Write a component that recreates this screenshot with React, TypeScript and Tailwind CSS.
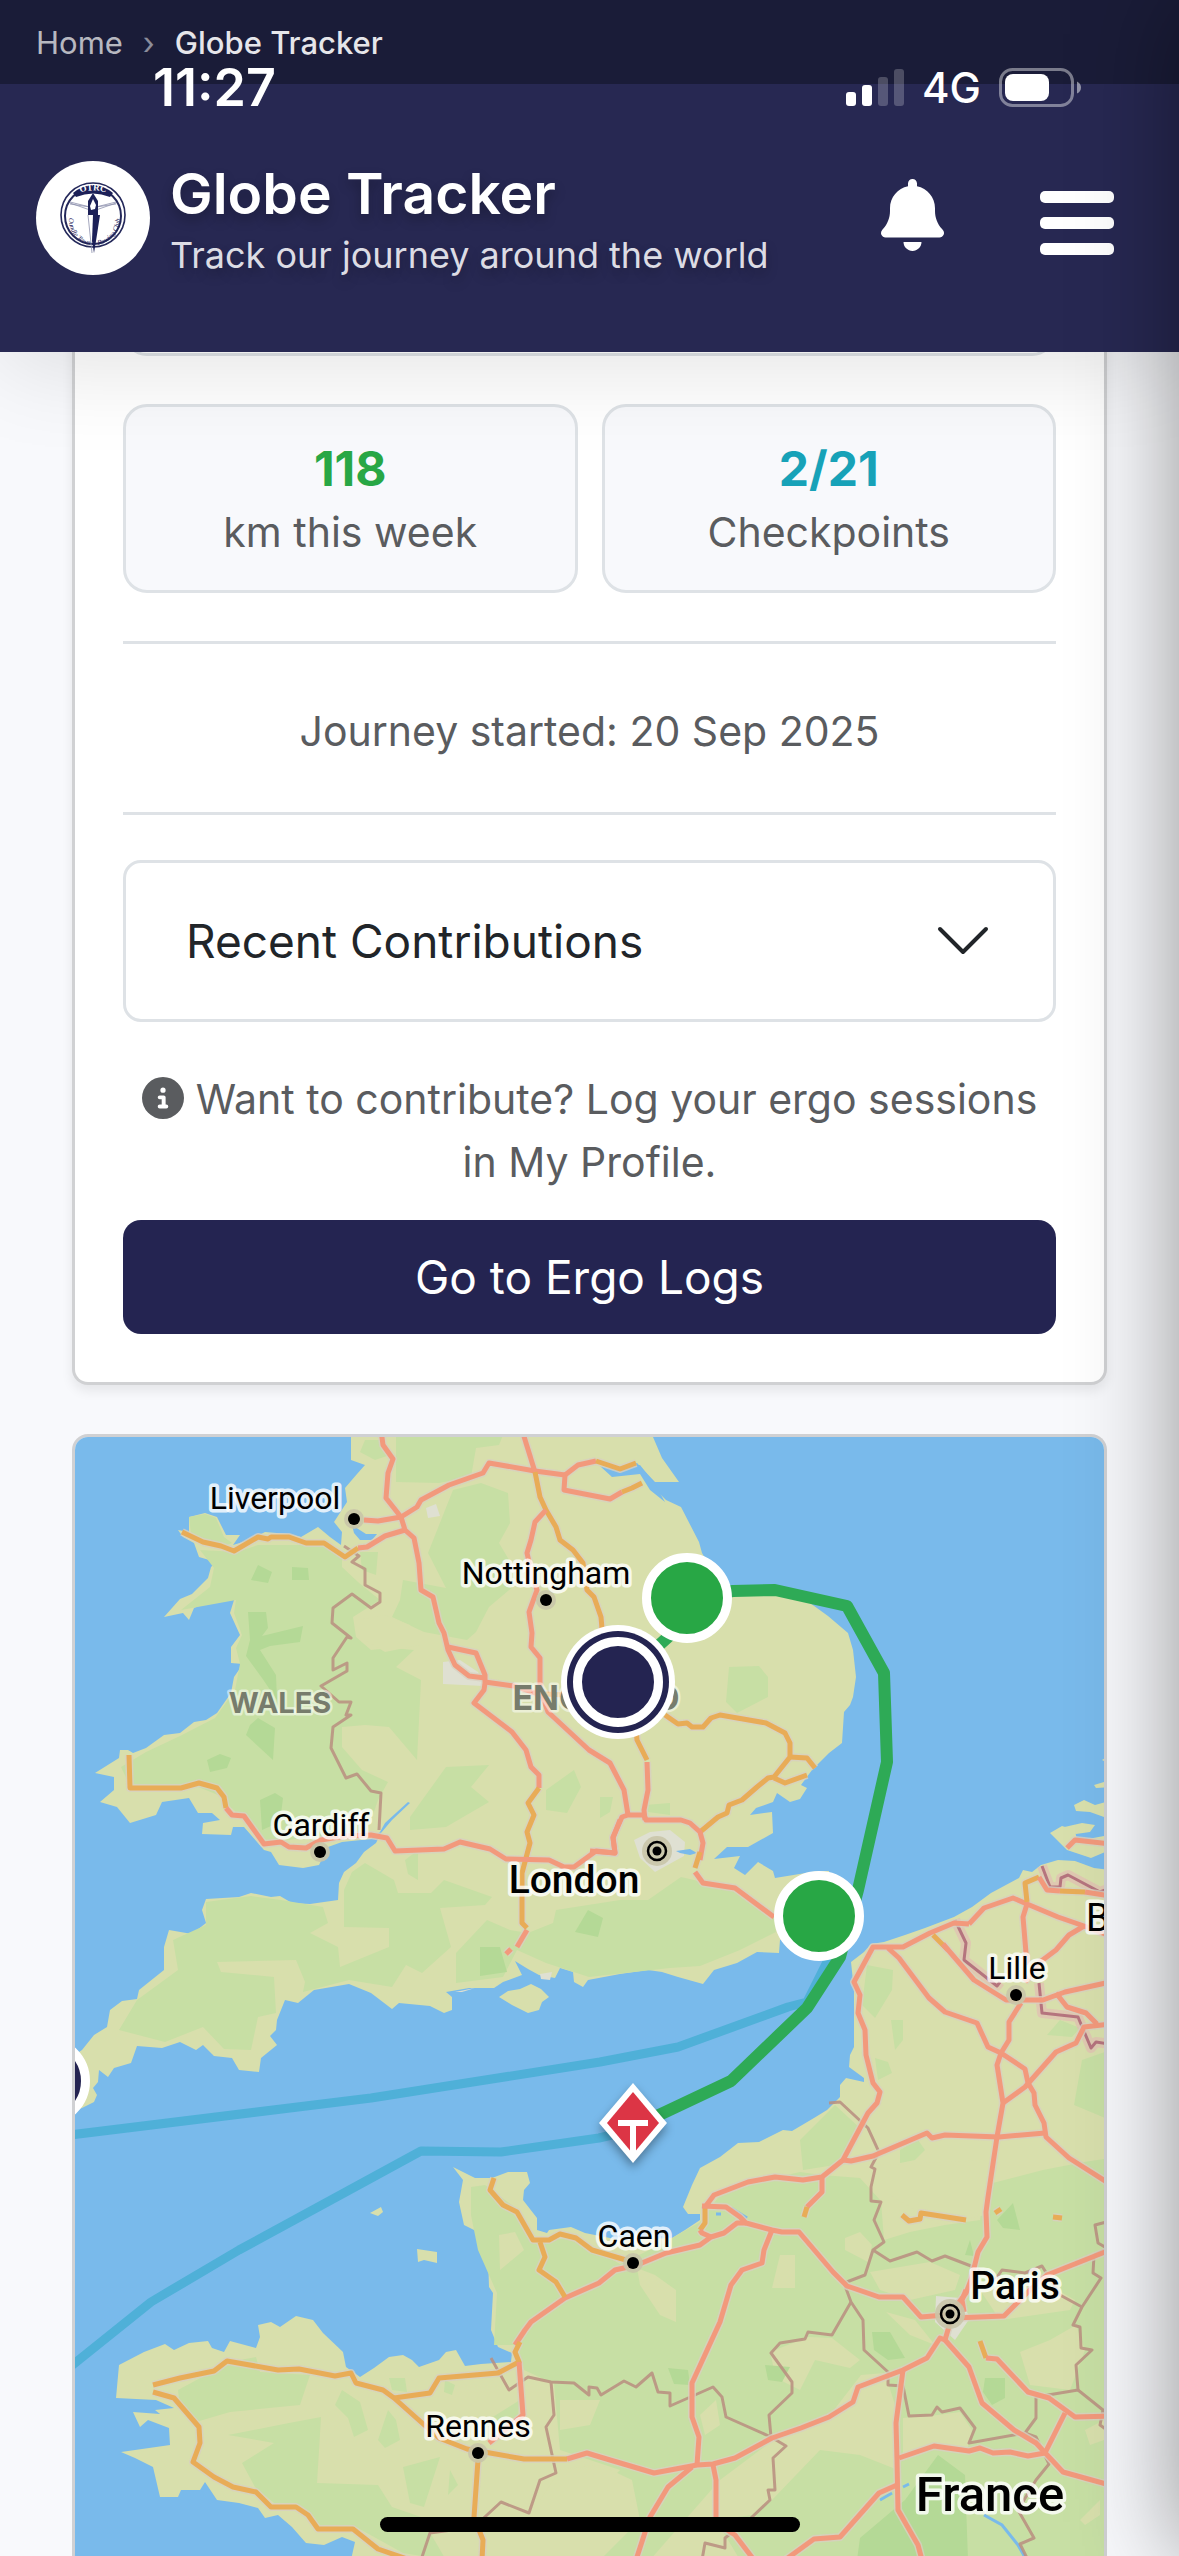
import React, { useState } from 'react';
import { FaBell, FaCircleInfo } from 'react-icons/fa6';

interface Road {
  kind: 'motorway' | 'trunk';
  points: string;
}

interface Place {
  name: string;
  x: number;
  y: number;
  size: number;
  weight: number;
}

interface Stat {
  value: string;
  label: string;
  colour: string;
}

const STATS: Stat[] = [
  { value: '118', label: 'km this week', colour: 'text-[#28a745]' },
  { value: '2/21', label: 'Checkpoints', colour: 'text-[#17a2b8]' },
];

// Land masses
const LAND: string[] = [
  // Great Britain
  '351,1430 351,1460 365,1465 357,1474 345,1488 347,1502 334,1522 342,1532 341,1545 330,1537 318,1527 301,1537 288,1534 265,1532 250,1540 233,1545 240,1535 226,1535 217,1517 205,1513 189,1517 189,1532 178,1530 183,1537 194,1543 199,1557 216,1562 211,1567 208,1578 192,1594 180,1599 164,1617 183,1613 189,1620 194,1608 208,1602 234,1600 230,1613 240,1635 231,1647 231,1663 243,1664 234,1677 231,1693 217,1713 206,1720 194,1722 180,1733 164,1735 146,1748 133,1753 128,1750 120,1750 119,1758 95,1773 114,1777 114,1790 100,1802 117,1807 130,1823 156,1815 162,1802 189,1798 198,1813 212,1813 220,1820 203,1823 202,1834 231,1835 233,1827 244,1827 264,1850 271,1852 279,1865 303,1868 319,1865 328,1847 342,1842 371,1839 380,1832 385,1823 408,1802 410,1803 392,1820 381,1833 376,1843 364,1852 356,1863 344,1872 339,1883 338,1900 310,1904 292,1903 280,1896 271,1897 251,1893 239,1897 206,1899 202,1910 206,1923 192,1934 169,1930 164,1947 164,1970 139,1990 137,1999 122,2001 110,2010 107,2027 94,2035 82,2050 70,2058 70,2112 82,2108 94,2102 97,2095 93,2088 98,2082 99,2070 108,2077 114,2068 131,2063 137,2046 162,2048 180,2042 196,2050 203,2045 214,2056 232,2058 239,2070 259,2072 261,2058 277,2045 270,2036 276,2030 277,2020 285,2000 298,2003 314,1990 349,1984 371,1993 392,2009 399,2003 430,2006 444,2013 452,2010 452,1997 446,1992 469,1988 494,1988 503,1982 522,1975 515,1961 528,1969 539,1975 555,1978 560,1968 573,1972 574,1982 583,1987 588,1980 620,1974 648,1970 662,1972 678,1977 703,1984 714,1970 737,1963 757,1952 779,1953 780,1940 812,1925 829,1900 829,1871 818,1871 775,1878 773,1871 758,1862 745,1875 734,1868 740,1856 714,1859 727,1847 748,1847 773,1833 772,1812 750,1815 756,1808 773,1802 777,1793 790,1802 800,1799 807,1788 801,1785 812,1770 829,1753 842,1743 844,1712 850,1705 853,1697 856,1677 853,1650 848,1633 828,1616 810,1603 777,1593 733,1596 715,1575 702,1553 699,1542 681,1507 666,1500 650,1484 641,1471 615,1475 610,1468 637,1463 655,1482 679,1482 662,1458 650,1430',
  // Continental coast, Zeeland round to Finistere
  '1110,1870 1094,1868 1075,1861 1058,1860 1041,1865 1032,1872 1023,1870 1019,1878 991,1893 972,1907 954,1917 925,1928 905,1935 884,1942 871,1944 864,1952 851,1962 854,1990 854,2047 850,2055 849,2067 864,2078 864,2082 846,2078 840,2085 840,2097 827,2110 814,2118 792,2131 783,2130 759,2142 738,2143 720,2157 700,2168 692,2185 683,2207 688,2214 700,2214 700,2220 685,2230 672,2238 620,2240 585,2233 571,2227 549,2230 547,2233 537,2230 537,2218 523,2200 524,2190 530,2183 527,2172 508,2172 492,2178 475,2178 453,2167 463,2180 459,2202 464,2225 478,2232 488,2257 489,2287 493,2293 491,2330 498,2347 512,2353 511,2362 481,2364 465,2366 456,2350 446,2352 439,2360 419,2367 412,2360 403,2355 389,2357 374,2368 360,2377 346,2367 343,2352 323,2333 313,2320 296,2316 280,2327 271,2322 258,2325 260,2337 256,2348 230,2341 224,2352 212,2348 208,2341 189,2343 174,2350 165,2344 144,2352 119,2365 116,2398 156,2400 174,2408 155,2410 160,2414 133,2412 140,2427 148,2420 169,2428 170,2445 121,2452 135,2458 153,2467 160,2497 178,2497 181,2490 200,2490 205,2482 217,2500 239,2503 258,2508 265,2518 278,2515 292,2527 306,2543 324,2545 342,2537 355,2542 351,2560 1110,2560',
  // Isle of Wight
  '499,1997 508,1991 520,1989 531,1984 541,1989 549,1997 542,2002 539,2010 528,2013 512,2005',
  '1050,1833 1062,1826 1075,1830 1077,1841 1104,1836 1110,1850 1091,1858 1067,1850',
  '1060,1828 1082,1823 1095,1825 1090,1832 1076,1834',
  '1074,1805 1084,1800 1095,1805 1110,1801 1110,1819 1090,1812 1076,1811',
  '1094,1785 1110,1780 1110,1787 1096,1788',
  '1102,1760 1110,1755 1110,1764',
  // Channel Islands
  '370,2213 381,2207 383,2212 378,2216',
  '417,2249 437,2252 437,2263 424,2260 418,2262',
];

const PASTURE: string[] = [
  '189,1517 205,1514 216,1518 224,1537 232,1543 222,1547 191,1534',
  '237,1552 258,1545 289,1545 324,1545 342,1557 342,1567 358,1582 364,1587 380,1600 353,1617 356,1637 371,1650 392,1648 414,1650 396,1667 421,1680 417,1760 389,1727 365,1725 342,1727 342,1747 362,1770 388,1782 378,1800 367,1832 320,1836 264,1843 239,1815 218,1795 196,1786 131,1788 121,1767 146,1752 180,1736 215,1718 235,1690 240,1664 236,1648 242,1635 234,1613 236,1600 181,1610 210,1587 214,1568 200,1550',
  '206,1902 251,1896 281,1900 323,1907 328,1923 310,1933 338,1947 340,1967 389,1947 389,1928 344,1927 344,1890 352,1872 365,1863 394,1880 398,1893 431,1893 444,1880 492,1897 485,1905 440,1908 451,1947 422,1973 406,1965 392,1987 349,1980 303,1992 305,1982 296,1960 217,1962 221,1972 274,1977 276,2013 258,2017 251,2050 224,2049 203,2027 165,2042 119,2030 137,2000 178,1970 173,1940 206,1925',
  '456,1953 487,1920 510,1930 528,1933 553,1923 556,1910 620,1900 648,1900 681,1877 729,1888 774,1917 776,1932 740,1950 700,1966 670,1968 589,1977 546,1963 517,1950 503,1977 456,1983',
  '396,1430 505,1430 499,1445 476,1448 471,1477 439,1483 396,1482',
  '453,1490 481,1483 508,1493 510,1523 499,1543 521,1580 489,1607 476,1632 467,1640 424,1632 392,1617 400,1600 403,1580 446,1588 428,1553',
  '410,1817 446,1767 489,1765 471,1787 489,1802 446,1827 410,1830',
  '546,1790 574,1770 581,1787 567,1813 546,1810',
  '729,1667 759,1666 768,1677 768,1697 737,1713 726,1702',
  '365,1440 380,1440 390,1455 375,1460 360,1452',
  '360,1552 378,1552 376,1575 362,1570',
  '405,1860 418,1850 418,1880 408,1874',
  '645,1805 670,1803 670,1815 648,1812',
  '600,1797 613,1797 610,1812 600,1818',
  // Normandy, Île-de-France, Picardy
  '471,2187 485,2185 521,2212 536,2240 574,2238 620,2264 660,2245 700,2222 720,2195 765,2180 800,2172 822,2175 860,2178 881,2201 884,2240 910,2232 945,2225 980,2220 985,2185 1043,2170 1084,2162 1110,2158 1110,2560 600,2560 590,2500 620,2470 560,2450 554,2384 524,2370 515,2345 494,2345 497,2293 478,2250 471,2215',
  '800,2140 835,2105 862,2130 835,2165 803,2170',
  '867,1965 893,1970 892,1990 875,2018 862,2005',
  '891,2020 903,2020 903,2040 895,2050',
  '875,2058 888,2062 892,2073 878,2080',
  '1082,2060 1110,2050 1110,2120 1074,2105',
  '1047,2035 1060,2020 1080,2028 1072,2037',
  '900,2150 918,2140 925,2150 915,2160 900,2163',
  // Brittany
  '178,2390 230,2362 256,2357 260,2372 310,2375 300,2405 230,2412 196,2422 180,2408',
  '242,2463 274,2443 228,2435 289,2423 321,2417 317,2483 378,2485 392,2507 421,2517 446,2560 403,2553 356,2527 317,2528 296,2503 274,2503 255,2487',
  '403,2467 440,2457 424,2507 410,2503',
  '389,2378 405,2378 407,2392 392,2390',
  '342,2390 360,2402 368,2430 354,2437 348,2418 335,2405',
  '480,2425 520,2400 518,2415 500,2430',
  '378,2440 388,2410 396,2420 400,2440 385,2448',
  '450,2470 458,2485 448,2495',
  '445,2380 455,2385 452,2395 444,2392',
];

const FIELDS: string[] = [
  '499,2235 515,2232 524,2250 512,2260 500,2270',
  '637,2268 655,2275 676,2290 676,2322 660,2315 640,2285',
  '845,2238 860,2232 872,2245 868,2262 845,2250',
  '780,2255 795,2255 795,2288 772,2288',
  '808,2337 832,2338 860,2360 850,2368 815,2360 800,2390 776,2378 770,2352',
  '861,2375 885,2373 895,2405 898,2470 860,2455 820,2450 772,2500 752,2515 716,2520 740,2560 650,2560 720,2480 780,2435 830,2415',
  '560,2400 600,2400 590,2425 560,2430',
  '600,2465 632,2480 640,2520 600,2560 480,2560 450,2530 500,2500 540,2500 560,2470',
  '700,2415 716,2400 720,2425 705,2435',
  '903,2418 930,2416 960,2412 972,2430 968,2447 925,2447 903,2460',
  '870,2272 930,2262 960,2275 955,2290 910,2300 880,2290',
  '1020,2352 1050,2340 1076,2325 1085,2350 1070,2390 1030,2385',
  '980,2290 1040,2280 1075,2300 1070,2310 1000,2320',
  '877,2165 990,2160 985,2215 940,2225 890,2195',
  '1085,2430 1104,2420 1104,2440 1090,2445',
  '1080,2520 1100,2500 1100,2515 1085,2525',
  '886,2312 915,2320 935,2345 910,2335',
  '358,1620 385,1615 410,1625 420,1645 385,1652 365,1640',
];

const FOREST: string[] = [
  '251,1580 258,1565 272,1572 268,1583',
  '292,1567 308,1568 309,1580 292,1580',
  '248,1612 266,1612 268,1628 262,1636 303,1626 300,1642 270,1646 260,1650 276,1675 277,1700 262,1678 246,1656 250,1640',
  '250,1725 258,1718 275,1728 273,1760 246,1735',
  '207,1760 220,1754 231,1758 227,1768 210,1772',
  '260,1800 275,1793 283,1798 280,1822 262,1830',
  '480,1947 500,1947 507,1972 480,1976',
  '575,1932 588,1910 603,1918 598,1937',
  '997,2220 1013,2203 1020,2230 1003,2228',
  '872,2332 890,2332 905,2358 888,2360 874,2350',
  '765,2365 790,2367 782,2382 768,2380',
  '668,2368 688,2370 690,2385 674,2384',
  '985,2378 1005,2378 1005,2398 992,2405 983,2392',
  '860,2538 905,2500 938,2455 965,2475 968,2560 857,2560',
  '965,2255 970,2240 974,2256',
];

// Estuaries and inlets
const WATER: string[] = [
  '352,1525 366,1534 377,1534 372,1540 360,1540 354,1533',
  '600,1466 618,1470 640,1465 655,1484 665,1502 650,1490 640,1474 612,1477',
  '676,1851 690,1849 697,1853 690,1855 680,1853',
];

const CITY: string[] = [
  '426,1508 436,1504 440,1516 428,1518',
  '443,1662 460,1660 478,1672 484,1686 443,1684',
  '634,1840 650,1832 670,1830 685,1842 684,1856 655,1872 640,1858',
  '936,2296 960,2298 970,2318 955,2340 935,2322',
  '455,1992 475,1988 462,1992',
  '540,1974 552,1972 550,1980 541,1979',
];

const BORDERS: string[] = [
  '344,1546 359,1556 352,1562 365,1569 365,1585 380,1593 380,1602 371,1608 352,1594 333,1608 332,1623 351,1638 347,1637 333,1658 333,1670 347,1663 347,1671 321,1686 339,1702 351,1702 346,1715 351,1715 333,1727 331,1748 346,1778 357,1774 371,1791 381,1793 379,1830',
  '829,2103 840,2102 868,2128 879,2152 871,2167 875,2169 871,2187 871,2201 881,2202 874,2220 884,2242 873,2250 865,2275 844,2283 851,2302 863,2320 864,2350 888,2372 888,2385 903,2386 909,2416 932,2415 937,2407 942,2412 960,2408 975,2428 969,2443 1025,2433 1036,2418 1036,2397 1078,2390 1076,2365 1092,2350 1081,2348 1080,2327 1073,2325 1082,2307 1101,2278 1093,2273 1094,2255 1104,2250',
  '873,2250 890,2261 917,2252 932,2261 945,2256 971,2266 995,2280 1002,2270 1025,2273 1042,2266 1060,2295 1082,2307',
  '851,2302 832,2335 808,2332 805,2339 780,2343 771,2353 792,2382 792,2393 769,2415 771,2437 786,2446 773,2458 775,2490 768,2490 770,2500 751,2518 725,2538 725,2548 705,2543 702,2560',
  '771,2437 726,2417 722,2397 713,2387 670,2406 670,2393 658,2392 652,2373 636,2387 624,2381 601,2395 597,2388 589,2387 589,2395 574,2383 551,2382 528,2377 509,2390 491,2358',
  '551,2382 554,2415 546,2427 556,2473 540,2480 529,2513 501,2502 474,2527 430,2533 421,2560',
  '1025,2433 1036,2437 1049,2464 1036,2480 1018,2510 1034,2538 1020,2544 1028,2560',
  '1078,2390 1103,2410 1100,2425 1110,2432',
  '1110,2221 1095,2225 1098,2243 1110,2250',
];

const NATIONAL_BORDERS: string[] = [
  '1042,1866 1050,1887 1060,1887 1061,1878 1068,1875 1100,1892 1110,1888',
  '955,1920 966,1943 964,1960 997,1986 1000,1982',
  '1039,1983 1042,2013 1078,2017 1091,2048 1096,2042 1110,2044',
];

const ROADS: Road[] = [
  { kind: 'trunk', points: '182,1532 203,1542 221,1546 234,1551 258,1537 268,1539 271,1537 289,1537 306,1543 324,1543 345,1557 358,1548' },
  { kind: 'motorway', points: '358,1548 367,1547 385,1536 405,1530' },
  { kind: 'motorway', points: '364,1520 378,1521 401,1517 417,1507 421,1500 449,1485 483,1473 489,1463 535,1471 565,1475 564,1490 610,1499 622,1492' },
  { kind: 'trunk', points: '622,1492 632,1488 642,1483' },
  { kind: 'motorway', points: '565,1475 578,1465 596,1461' },
  { kind: 'trunk', points: '596,1461 620,1469 636,1463' },
  { kind: 'motorway', points: '381,1430 383,1445 393,1459 388,1473 386,1498 401,1517 405,1530 414,1538 419,1563 421,1590 433,1597 439,1623 444,1633 448,1650 455,1665 469,1676 485,1678' },
  { kind: 'motorway', points: '448,1647 476,1653 485,1675 485,1683 484,1690 474,1703 512,1732 526,1750 531,1767 539,1775 539,1788' },
  { kind: 'trunk', points: '539,1788 528,1803 534,1815 527,1832 530,1843 522,1873 522,1923 527,1928' },
  { kind: 'motorway', points: '527,1930 517,1947' },
  { kind: 'motorway', points: '511,1949 506,1954' },
  { kind: 'motorway', points: '485,1682 514,1686 535,1693 545,1694' },
  { kind: 'trunk', points: '545,1694 565,1695' },
  { kind: 'motorway', points: '522,1430 535,1472' },
  { kind: 'trunk', points: '535,1472 540,1497 546,1510 556,1527 560,1540 573,1550 583,1563 587,1590 594,1597 601,1617 603,1640' },
  { kind: 'motorway', points: '546,1510 535,1522 531,1540 527,1553 532,1575 537,1590 529,1612 532,1633 531,1647 540,1658 540,1690 548,1712 589,1750 610,1763 624,1790 628,1815' },
  { kind: 'trunk', points: '636,1730 637,1740 647,1760' },
  { kind: 'motorway', points: '647,1762 648,1790 644,1810 645,1820' },
  { kind: 'trunk', points: '700,1832 718,1817 727,1813 729,1805 742,1800 757,1787 768,1778 774,1777 790,1757 790,1743 785,1733 766,1723 720,1715 711,1718 703,1727 692,1727 687,1723 678,1724 665,1715' },
  { kind: 'trunk', points: '790,1757 807,1758 815,1768' },
  { kind: 'trunk', points: '774,1778 785,1783 807,1775' },
  { kind: 'motorway', points: '590,1851 615,1853 613,1837 622,1817 628,1815 644,1815 646,1820 681,1820 690,1823 700,1832 703,1843 700,1860' },
  { kind: 'trunk', points: '700,1852 695,1868' },
  { kind: 'motorway', points: '695,1872 703,1883 735,1888 774,1917' },
  { kind: 'trunk', points: '129,1755 130,1788 181,1788 199,1783 217,1788 224,1797 226,1808' },
  { kind: 'motorway', points: '226,1808 232,1815 244,1816 264,1844 281,1842 289,1847 306,1848 321,1840 345,1836 371,1835 387,1838 395,1851 444,1849 460,1842 490,1849 506,1859 549,1860 564,1867 574,1867 596,1851 615,1853 613,1838 620,1820' },
  // France and Belgium
  { kind: 'motorway', points: '969,1924 954,1923 930,1933 903,1947 873,1947 854,1982 860,1995 858,2013 865,2030 866,2055 873,2083 880,2092 877,2103 868,2113 843,2160 822,2177 803,2180 775,2177 748,2182 714,2195 705,2207' },
  { kind: 'trunk', points: '705,2207 705,2223 700,2230' },
  { kind: 'motorway', points: '969,1924 984,1908 1013,1898 1027,1904 1058,1917 1084,1926 1110,1936' },
  { kind: 'motorway', points: '1084,1926 1069,1935 1056,1950 1040,1962 1025,1982' },
  { kind: 'motorway', points: '888,1948 899,1958 929,1998 945,2012 977,2023 988,2047 1001,2053 1025,2069 1028,2083 1034,2093 1035,2105 1044,2123 1046,2137 1069,2158 1110,2184' },
  { kind: 'trunk', points: '933,1935 948,1950' },
  { kind: 'motorway', points: '943,1944 974,1980 1006,2000 1043,2000 1065,1992 1110,1982' },
  { kind: 'motorway', points: '1021,2003 1009,2022 1009,2040 1001,2053 997,2065 1003,2103 997,2137 988,2197 986,2212 987,2237 978,2252 971,2280 966,2293 951,2313' },
  { kind: 'motorway', points: '1003,2103 1025,2087 1056,2052 1076,2043 1084,2027 1110,2024' },
  { kind: 'motorway', points: '1056,1993 1067,2007 1086,2013 1097,2024' },
  { kind: 'motorway', points: '843,2160 851,2161 873,2156 927,2133 932,2138 945,2135 999,2137 1045,2133' },
  { kind: 'motorway', points: '1027,1904 1023,1917 1027,1965' },
  { kind: 'trunk', points: '1027,1902 1025,1883 1039,1877' },
  { kind: 'motorway', points: '1039,1877 1047,1890 1060,1891' },
  { kind: 'trunk', points: '1060,1891 1085,1892' },
  { kind: 'motorway', points: '1085,1892 1110,1896' },
  { kind: 'motorway', points: '1067,1848 1075,1840 1110,1844' },
  { kind: 'motorway', points: '702,2206 726,2207 740,2217 746,2223 772,2230 782,2232 799,2232 833,2272 847,2286 879,2297 903,2297 921,2317 945,2315' },
  { kind: 'motorway', points: '772,2230 764,2250 762,2263 742,2270 731,2285 720,2322 692,2383 692,2417 699,2437 697,2465' },
  { kind: 'motorway', points: '515,2345 525,2330 531,2322 565,2298 599,2283 615,2270 637,2265 666,2253 700,2245 711,2237 724,2233 737,2223 746,2223' },
  { kind: 'motorway', points: '700,2230 702,2233 711,2237' },
  { kind: 'motorway', points: '822,2177 822,2192 807,2207' },
  { kind: 'trunk', points: '807,2207 804,2217' },
  { kind: 'motorway', points: '966,2290 962,2300 964,2312' },
  { kind: 'motorway', points: '954,2318 1004,2316 1030,2290 1047,2275 1110,2250' },
  { kind: 'motorway', points: '950,2323 945,2340 940,2338 927,2358 903,2370 858,2387 853,2402 829,2417 801,2428 772,2438 735,2458 713,2464 697,2465 654,2473 600,2457 587,2453 567,2459' },
  { kind: 'trunk', points: '567,2459 524,2459 490,2453 467,2449 439,2438 394,2398 383,2390 356,2383 351,2373 335,2376 299,2369 278,2370 227,2361 214,2371 180,2378 153,2385' },
  { kind: 'trunk', points: '394,2398 430,2393 439,2378 498,2373 519,2362 515,2352 520,2342' },
  { kind: 'motorway', points: '519,2362 523,2415 489,2443' },
  { kind: 'trunk', points: '153,2392 174,2398 199,2427 200,2443 193,2462 214,2477 233,2487 256,2492 271,2507 296,2507 308,2515 318,2529 353,2529 378,2549 410,2560' },
  { kind: 'trunk', points: '478,2460 474,2517 483,2540 482,2560' },
  { kind: 'trunk', points: '494,2178 490,2190 503,2205 517,2212 533,2240 549,2240 560,2234 576,2238 592,2250 626,2260' },
  { kind: 'trunk', points: '540,2242 545,2257 539,2270 556,2282 565,2297' },
  { kind: 'motorway', points: '903,2370 896,2423 897,2460 898,2510 918,2545 922,2560' },
  { kind: 'motorway', points: '899,2458 934,2446 969,2451 980,2448 993,2453 1010,2452 1028,2456 1045,2453 1065,2413' },
  { kind: 'motorway', points: '945,2340 969,2367 982,2403 1014,2430 1036,2443 1063,2472 1110,2485' },
  { kind: 'trunk', points: '980,2341 986,2358' },
  { kind: 'motorway', points: '986,2358 997,2359 1028,2392 1049,2398 1075,2417 1110,2416' },
  { kind: 'motorway', points: '897,2485 879,2493 840,2537 814,2539 785,2560' },
  { kind: 'motorway', points: '692,2467 668,2487 650,2517 636,2560' },
  { kind: 'motorway', points: '713,2465 716,2480 716,2523 735,2535 754,2560' },
  { kind: 'trunk', points: '902,2215 909,2221 920,2219 921,2213 966,2220' },
  { kind: 'trunk', points: '995,2213 1001,2209' },
  { kind: 'trunk', points: '1053,2217 1062,2218' },
];

const PLACES: Place[] = [
  { name: 'Liverpool', x: 275, y: 1509, size: 32, weight: 400 },
  { name: 'Nottingham', x: 546, y: 1584, size: 32, weight: 400 },
  { name: 'Cardiff', x: 321, y: 1836, size: 32, weight: 400 },
  { name: 'Lille', x: 1017, y: 1979, size: 32, weight: 400 },
  { name: 'Caen', x: 634, y: 2247, size: 32, weight: 400 },
  { name: 'Rennes', x: 478, y: 2437, size: 32, weight: 400 },
  { name: 'London', x: 574, y: 1893, size: 39, weight: 500 },
  { name: 'Paris', x: 1015, y: 2299, size: 39, weight: 500 },
  { name: 'France', x: 990, y: 2511, size: 49, weight: 500 },
];

const TOWNS = [
  [354, 1519],
  [546, 1600],
  [320, 1852],
  [1016, 1995],
  [633, 2263],
  [478, 2453],
];

const CAPITALS = [
  [657, 1851],
  [950, 2314],
];

const ClubLogo: React.FC = () => (
  <svg viewBox="0 0 114 114" className="size-[114px] shrink-0" role="img" aria-label="Club logo">
    <defs>
      <path id="crest-left" d="M33 57a25 25 0 0 0 21 27" />
      <path id="crest-right" d="M62 84a27 27 0 0 0 22-28" />
      <path id="crest-top" d="M40 33q17-7 34 0" />
    </defs>
    <circle cx="57" cy="57" r="57" fill="#fff" />
    <circle cx="57" cy="54" r="32" fill="none" stroke="#24285a" strokeWidth="1.6" />
    <circle cx="57" cy="55" r="28" fill="none" stroke="#24285a" strokeWidth="2" />
    <path d="M37 32q20-16 40 0l-3 4q-17-7-34 0z" fill="#1c2058" />
    <text fontFamily="'Liberation Serif', serif" fontSize="9" fontWeight="700" fill="#fff" textAnchor="middle">
      <textPath href="#crest-top" startOffset="50%">OTRC</textPath>
    </text>
    <path d="M34 41l20 5M34 43l20 3M80 41l-20 5M80 43l-20 3M34 42l20 7M80 42l-20 7" stroke="#8d90ad" strokeWidth="0.8" />
    <path d="M57 32l5 8v14h-10v-14z" fill="#1c2058" />
    <path d="M57 38l3 6-1 4-4 1-1-4z" fill="#fff" />
    <path d="M57 54h7l-4 26-2 12-2-12z" fill="#1c2058" />
    <path d="M52 54l4 38" stroke="#8d90ad" strokeWidth="0.8" />
    <g fontFamily="'Liberation Serif', serif" fontSize="7" fontStyle="italic" fill="#1c2058">
      <text>
        <textPath href="#crest-left">Oundle Town</textPath>
      </text>
      <text>
        <textPath href="#crest-right">Rowing Club</textPath>
      </text>
    </g>
  </svg>
);

const StatusBar: React.FC = () => (
  <div className="pointer-events-none absolute inset-x-0 top-[62px] flex h-[52px] items-center justify-between pl-[153px] pr-[97px] text-white">
    <span className="text-[52px] font-semibold leading-[52px]">11:27</span>
    <div className="flex items-center gap-[18px]">
      <svg viewBox="0 0 58 38" className="h-[38px] w-[58px]" fill="#fff" aria-hidden="true">
        <rect x="0" y="23" width="10" height="14" rx="3" />
        <rect x="16" y="16" width="10" height="21" rx="3" />
        <rect x="32" y="8" width="10" height="29" rx="3" opacity="0.22" />
        <rect x="48" y="0" width="10" height="37" rx="3" opacity="0.22" />
      </svg>
      <span className="text-[42px] font-medium leading-[52px]">4G</span>
      <svg viewBox="0 0 83 40" className="h-[40px] w-[83px]" aria-hidden="true">
        <rect x="1.500" y="1.500" width="72" height="36" rx="12" fill="none" stroke="#fff" strokeOpacity="0.42" strokeWidth="3" />
        <rect x="6" y="6" width="44" height="27" rx="8" fill="#fff" />
        <path d="M78 13.500q4 2 4 6t-4 6z" fill="#fff" opacity="0.5" />
      </svg>
    </div>
  </div>
);

const Header: React.FC = () => (
  <header className="relative z-10 shadow-[0_12px_90px_rgba(0,0,0,0.12)]">
    <nav aria-label="Breadcrumb" className="h-[84px] bg-[#1a1c38] px-9 pt-[22px]">
      <ol className="flex items-center text-[31px] leading-[42px]">
        <li>
          <a href="#home" className="text-white/70">Home</a>
        </li>
        <li aria-hidden="true" className="px-5 text-white/50">›</li>
        <li aria-current="page" className="font-medium text-[#e6e6ea]">Globe Tracker</li>
      </ol>
    </nav>
    <div className="flex h-[268px] items-start bg-[#272852] pl-9 pr-[65px] pt-[77px]">
      <ClubLogo />
      <div className="ml-5 min-w-0 flex-1 [text-shadow:0_6px_12px_rgba(0,0,0,0.25)]">
        <h1 className="text-[57px] font-semibold leading-[66px] text-white">Globe Tracker</h1>
        <p className="text-[36px] leading-[56px] text-[#dcdce4]">Track our journey around the world</p>
      </div>
      <button type="button" aria-label="Notifications" className="mt-[18px] text-white">
        <FaBell className="h-[72px] w-[63px]" />
      </button>
      <button type="button" aria-label="Open menu" className="ml-[96px] mt-[30px] flex w-[74px] flex-col gap-[14px]">
        <span className="h-[12px] w-full rounded-[5px] bg-white"></span>
        <span className="h-[12px] w-full rounded-[5px] bg-white"></span>
        <span className="h-[12px] w-full rounded-[5px] bg-white"></span>
      </button>
    </div>
    <StatusBar />
  </header>
);

const JourneyMap: React.FC = () => (
  <svg viewBox="75 1437 1029 1119" className="block w-full bg-[#79baeb]" role="img" aria-label="Map of the journey so far">
    <g fill="#d8dfac">
      {LAND.map((points) => <polygon key={points} points={points} />)}
    </g>
    <g fill="#c7dfa4">
      {PASTURE.map((points) => <polygon key={points} points={points} />)}
    </g>
    <g fill="#d8dfac">
      {FIELDS.map((points) => <polygon key={points} points={points} />)}
    </g>
    <g fill="#b4d996">
      {FOREST.map((points) => <polygon key={points} points={points} />)}
    </g>
    <g fill="#dfe0d2">
      {CITY.map((points) => <polygon key={points} points={points} />)}
    </g>
    <g fill="#79baeb">
      {WATER.map((points) => <polygon key={points} points={points} />)}
    </g>
    <path d="M880 2500l12-7M903 2487l6-3M984 2515l18 10l16 20l8 14M716 2214h5M731 2208l16 10" fill="none" stroke="#79baeb" strokeWidth="3" />
    <g fill="none" stroke="#b98f80" strokeWidth="3" strokeLinejoin="round" opacity="0.85">
      {BORDERS.map((points) => <polyline key={points} points={points} />)}
    </g>
    <g fill="none" stroke="#e3bfb4" strokeWidth="10" strokeLinejoin="round" opacity="0.7">
      {NATIONAL_BORDERS.map((points) => <polyline key={points} points={points} />)}
    </g>
    <g fill="none" stroke="#b5747e" strokeWidth="3" strokeLinejoin="round">
      {NATIONAL_BORDERS.map((points) => <polyline key={points} points={points} />)}
    </g>

    <g fill="none" strokeLinejoin="round">
      {ROADS.map((road) => (
        <polyline key={road.points} points={road.points} stroke="#d8cfc0" strokeWidth="8" opacity="0.8" />
      ))}
      {ROADS.map((road) => (
        <polyline
          key={road.points}
          points={road.points}
          stroke={road.kind === 'motorway' ? '#f2997c' : '#e8ac57'}
          strokeWidth="5"
        />
      ))}
    </g>

    <g fill="#c9c5a8" opacity="0.9">
      {TOWNS.map(([x, y]) => <circle key={x} cx={x} cy={y} r="10" />)}
      {CAPITALS.map(([x, y]) => <circle key={x} cx={x} cy={y} r="15" />)}
    </g>
    {TOWNS.map(([x, y]) => <circle key={x} cx={x} cy={y} r="6" fill="#000" />)}
    {CAPITALS.map(([x, y]) => (
      <g key={x}>
        <circle cx={x} cy={y} r="9" fill="none" stroke="#000" strokeWidth="2.500" />
        <circle cx={x} cy={y} r="4.500" fill="#000" />
      </g>
    ))}

    <g
      fontFamily="Roboto, 'Liberation Sans', sans-serif"
      textAnchor="middle"
      stroke="#fff"
      strokeOpacity="0.8"
      strokeWidth="7"
      strokeLinejoin="round"
      paintOrder="stroke"
    >
      {PLACES.map((place) => (
        <text key={place.name} x={place.x} y={place.y} fontSize={place.size} fontWeight={place.weight}>
          {place.name}
        </text>
      ))}
      <text x="1086" y="1931" fontSize="38" textAnchor="start">B</text>
      <g fontFamily="Inter, 'Liberation Sans', sans-serif" fontWeight="700" fill="#777c6c" strokeOpacity="0.5" strokeWidth="5">
        <text x="280" y="1713" fontSize="29">WALES</text>
        <text x="596" y="1710" fontSize="34">ENGLAND</text>
      </g>
    </g>

    {/* Planned route, then the part already covered */}
    <g fill="none" stroke="#4fb0d8" strokeWidth="9" strokeLinejoin="round">
      <polyline points="840,1936 807,2002 788,2007 678,2047 600,2062 371,2098 70,2135" />
      <polyline points="633,2130 599,2138 501,2152 421,2151 331,2200 239,2250 151,2302 70,2367" />
    </g>
    <polyline
      points="618,1682 687,1620 687,1598 733,1591 775,1590 847,1606 884,1673 887,1762 858,1890 840,1957 807,2008 731,2081 659,2115 633,2124"
      fill="none"
      stroke="#2eaa56"
      strokeWidth="12"
      strokeLinejoin="round"
    />

    <circle cx="45" cy="2081" r="40.500" fill="#242451" stroke="#fff" strokeWidth="9" />
    <circle cx="687" cy="1598" r="40.500" fill="#28a745" stroke="#fff" strokeWidth="9" />
    <circle cx="819" cy="1916" r="40.500" fill="#28a745" stroke="#fff" strokeWidth="9" />
    <circle cx="618" cy="1682" r="57" fill="#fff" />
    <circle cx="618" cy="1682" r="51" fill="#242451" />
    <circle cx="618" cy="1682" r="40.500" fill="#242451" stroke="#fff" strokeWidth="9" />
    <g className="drop-shadow-[0_5px_5px_rgba(0,0,0,0.35)]">
      <path d="M633 2083l34 40-34 40-34-40z" fill="#fff" />
      <path d="M633 2092l26 31-26 31-26-31z" fill="#dc3545" />
      <rect x="618" y="2120" width="30" height="6" fill="#fff" />
      <rect x="630" y="2123" width="6" height="34" fill="#fff" />
    </g>
    <circle cx="409" cy="1392" r="45" fill="#fff" />
  </svg>
);

const App: React.FC = () => {
  const [isOpen, setIsOpen] = useState(false);

  return (
    <div className="relative min-h-screen overflow-hidden bg-[#f8f9fc] font-[Inter,'Liberation_Sans',sans-serif]">
      <Header />

      <main className="px-[72px]">
        <section className="rounded-b-[16px] border-x-3 border-b-3 border-[#d0d1d3] bg-white px-12 pb-12 shadow-[0_6px_12px_rgba(0,0,0,0.08)]">
          <div className="-mt-6 h-[28px] rounded-b-[24px] border-x-3 border-b-3 border-[#dee2e6]"></div>

          <div className="mt-12 grid grid-cols-2 gap-6">
            {STATS.map((stat) => (
              <div key={stat.label} className="rounded-[24px] border-3 border-[#dee2e6] bg-[#f8f9fc] pb-[26px] pt-[30px] text-center">
                <div className={`text-[48px] font-bold leading-[64px] ${stat.colour}`}>{stat.value}</div>
                <div className="text-[41px] leading-[63px] text-[#5a5c5f]">{stat.label}</div>
              </div>
            ))}
          </div>

          <hr className="mt-12 border-t-3 border-[#dee2e6]" />
          <p className="pb-[51px] pt-[57px] text-center text-[41px] leading-[60px] text-[#5a5c5f]">Journey started: 20 Sep 2025</p>
          <hr className="border-t-3 border-[#dee2e6]" />

          <button
            type="button"
            aria-expanded={isOpen}
            onClick={() => setIsOpen(!isOpen)}
            className="mt-[45px] flex h-[162px] w-full items-center justify-between rounded-[18px] border-3 border-[#dee2e6] bg-white px-[60px] text-[46px] text-[#212529]"
          >
            Recent Contributions
            <svg viewBox="0 0 60 60" className="size-[60px]" fill="none" stroke="#212529" strokeWidth="4" strokeLinecap="round" strokeLinejoin="round" aria-hidden="true">
              <path d="M7 18l23 23 23-23" />
            </svg>
          </button>

          <p className="mt-[46px] text-center text-[41px] leading-[63px] text-[#5a5c5f]">
            <FaCircleInfo className="mr-3 inline size-[42px] align-[-5px]" />
            Want to contribute? Log your ergo sessions in My Profile.
          </p>
          <a href="#ergo-logs" className="mt-[26px] block rounded-[18px] bg-[#242451] text-center text-[46px] leading-[114px] text-white">
            Go to Ergo Logs
          </a>
        </section>

        <section className="mt-[49px] overflow-hidden rounded-t-[16px] border-3 border-b-0 border-[#d0d1d3]">
          <JourneyMap />
        </section>
      </main>

      <div className="absolute inset-y-0 left-full z-20 w-[400px] shadow-[0_0_96px_rgba(0,0,0,0.42)]"></div>
      <div className="absolute bottom-[24px] left-1/2 z-30 h-[15px] w-[420px] -translate-x-1/2 rounded-full bg-black"></div>
    </div>
  );
};

export default App;
